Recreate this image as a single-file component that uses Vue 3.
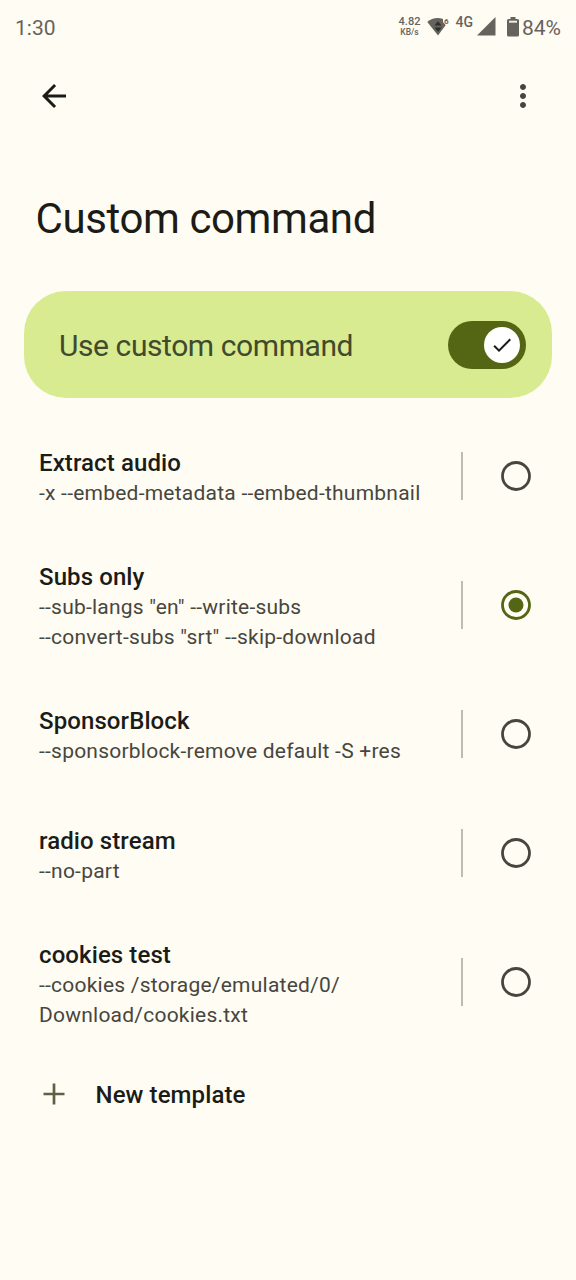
<script setup>
import { ref } from 'vue'

const enabled = ref(true)
const selected = ref(1)
const templates = [
  { name: 'Extract audio', lines: ['-x --embed-metadata --embed-thumbnail'] },
  { name: 'Subs only', lines: ['--sub-langs "en" --write-subs', '--convert-subs "srt" --skip-download'] },
  { name: 'SponsorBlock', lines: ['--sponsorblock-remove default -S +res'] },
  { name: 'radio stream', lines: ['--no-part'] },
  { name: 'cookies test', lines: ['--cookies /storage/emulated/0/', 'Download/cookies.txt'] },
]
</script>

<template>
  <div class="screen">
    <header class="status">
      <span class="clock">1:30</span>
      <div class="indicators">
        <div class="speed"><span class="rate">4.82</span><span class="unit">KB/s</span></div>
        <svg class="wifi" width="24" height="20" viewBox="0 0 24 20">
          <path d="M0.3 5C6 -0.2 15 -0.2 21 5L11 18.5Z" fill="#65635e" />
          <path d="M7.5 8.5L11 4.2L14.5 8.5ZM7.5 10.5H14.5L11 15Z" fill="#2f2e2b" />
          <path d="M16 0H23V8H18.5L16 5Z" fill="#fffcf4" />
          <text x="17" y="7" class="gen">6</text>
        </svg>
        <span class="net">4G</span>
        <svg class="signal" width="19" height="19" viewBox="0 0 19 19"><path d="M18.5 0V18.5H0Z" fill="#65635e" /></svg>
        <svg class="battery" width="12" height="20" viewBox="0 0 12 20">
          <path d="M3.5 0H8.5V2H10.5Q12 2 12 3.5V18Q12 19.5 10.5 19.5H1.5Q0 19.5 0 18V3.5Q0 2 1.5 2H3.5Z" fill="#65635e" />
          <rect x="2" y="3.7" width="8" height="2" fill="#f0ede5" />
        </svg>
        <span class="percent">84%</span>
      </div>
    </header>

    <nav class="bar">
      <svg width="36" height="36" viewBox="0 0 24 24"><path d="M20 11H7.83l5.59-5.59L12 4l-8 8 8 8 1.41-1.41L7.83 13H20z" fill="#1b1c17" /></svg>
      <svg width="36" height="36" viewBox="0 0 24 24"><path d="M12 8c1.1 0 2-.9 2-2s-.9-2-2-2-2 .9-2 2 .9 2 2 2m0 2c-1.1 0-2 .9-2 2s.9 2 2 2 2-.9 2-2-.9-2-2-2m0 6c-1.1 0-2 .9-2 2s.9 2 2 2 2-.9 2-2-.9-2-2-2" fill="#46453e" /></svg>
    </nav>

    <h1>Custom command</h1>

    <section class="card" @click="enabled = !enabled">
      <span class="cardlabel">Use custom command</span>
      <span class="switch" :class="{ on: enabled }">
        <span class="thumb">
          <svg width="24" height="24" viewBox="0 0 24 24"><path d="M9 16.17L4.83 12l-1.42 1.41L9 19 21 7l-1.41-1.41z" fill="#1b1c17" /></svg>
        </span>
      </span>
    </section>

    <main>
      <div v-for="(t, i) in templates" :key="t.name" class="row" :class="{ tall: t.lines.length > 1 }" @click="selected = i">
        <div class="text">
          <div class="name">{{ t.name }}</div>
          <div v-for="l in t.lines" :key="l" class="line">{{ l }}</div>
        </div>
        <span class="divider"></span>
        <svg class="radio" :class="{ checked: selected === i }" width="30" height="30" viewBox="0 0 30 30">
          <circle class="ring" cx="15" cy="15" r="13.5" />
          <circle v-if="selected === i" class="dot" cx="15" cy="15" r="7.5" />
        </svg>
      </div>
      <div class="new">
        <svg width="36" height="36" viewBox="0 0 24 24"><path d="M19 12.9H12.9V19H11.1V12.9H5V11.1H11.1V5H12.9V11.1H19z" fill="#5d6044" /></svg>
        <span class="name">New template</span>
      </div>
    </main>
  </div>
</template>

<style>
body { background: #fffcf4; }
</style>

<style scoped>
.screen { box-sizing: border-box; width: 576px; height: 1280px; overflow: hidden; background: #fffcf4; color: #1b1c17; font-family: Roboto, "Liberation Sans", sans-serif; }
.status { display: flex; justify-content: space-between; height: 56px; padding: 0 15px; color: #65635e; }
.clock, .percent { font-size: 21px; line-height: 56px; }
.indicators { display: flex; align-items: flex-start; }
.speed { display: flex; flex-direction: column; align-items: center; width: 22px; margin-top: 16px; white-space: nowrap; font-weight: 500; }
.rate { font-size: 11px; line-height: 12px; }
.unit { font-size: 8.5px; line-height: 9px; }
.wifi { margin: 17px 0 0 6px; }
.gen { font: 700 8px Roboto, sans-serif; fill: #65635e; }
.net { margin: 15px 0 0 5px; font-size: 14px; line-height: 15px; font-weight: 500; }
.signal { margin: 17px 0 0 4px; }
.battery { margin: 17px 0 0 11px; }
.percent { margin-left: 3px; }
.bar { display: flex; justify-content: space-between; align-items: center; height: 80px; padding: 0 35px 0 36px; }
h1 { margin: 57px 0 0 35.5px; font-size: 42px; line-height: 51px; font-weight: 400; letter-spacing: -0.4px; }
.card { display: flex; justify-content: space-between; align-items: center; box-sizing: border-box; height: 107px; margin: 47.3px 24px 0; padding: 0 26.5px 0 35px; border-radius: 42px; background: #d8eb91; }
.cardlabel { padding-top: 2px; color: #414a2c; font-size: 30px; line-height: 42px; letter-spacing: -0.42px; }
.switch { display: flex; align-items: center; box-sizing: border-box; width: 78px; height: 48px; padding: 6px; border-radius: 24px; background: #8b8b80; }
.switch.on { justify-content: flex-end; background: #546614; }
.thumb { display: flex; align-items: center; justify-content: center; width: 36px; height: 36px; border-radius: 50%; background: #fff; }
main { padding-top: 17.5px; }
.row { display: flex; align-items: center; box-sizing: border-box; height: 119.6px; padding: 0 45px 0 39px; }
.row.tall { height: 138.5px; }
.text { flex: 1; padding-top: 5px; white-space: nowrap; }
.name { font-size: 24px; line-height: 30px; font-weight: 500; letter-spacing: 0.1px; }
.line { color: #47463e; font-size: 21px; line-height: 30px; letter-spacing: 0.23px; }
.divider { width: 1.6px; height: 48px; background: #bdbbb3; }
.radio { margin-left: 38px; fill: none; stroke: #47463e; }
.radio.checked { stroke: #546614; }
.ring { stroke-width: 2.8; }
.dot { fill: #546614; stroke: none; }
.new { display: flex; align-items: center; height: 84px; padding-left: 35.5px; }
.new .name { margin-left: 24px; padding-top: 2px; }
</style>
